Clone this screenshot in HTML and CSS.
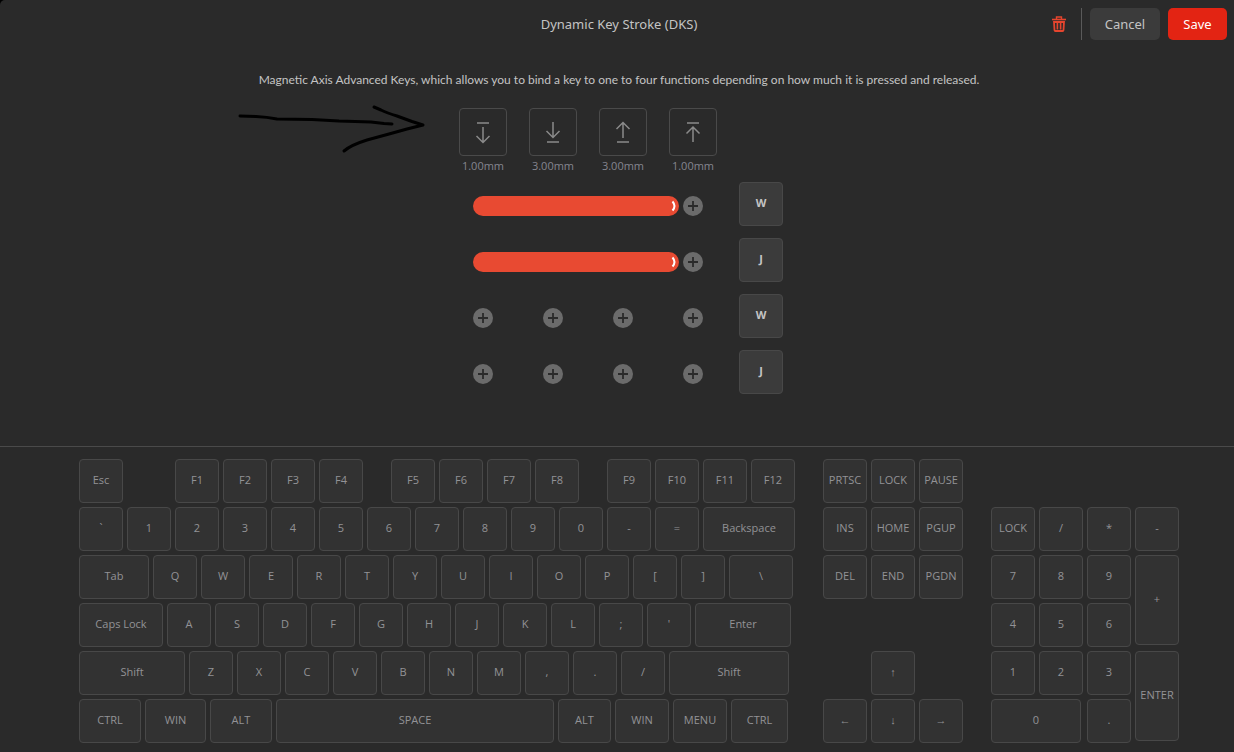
FILE: index.html
```html
<!DOCTYPE html>
<html lang="en">
<head>
  <meta charset="UTF-8">
  <title>Dynamic Key Stroke (DKS)</title>
  <meta name="viewport" content="width=device-width, initial-scale=1">
  <link rel="stylesheet" href="styles.css">
</head>
<body>
  <!-- shared icons -->
  <svg class="sprite" aria-hidden="true">
    <symbol id="plus" viewBox="0 0 20 20">
      <path d="M10 5v10M5 10h10" fill="none" stroke="#2a2a2a" stroke-width="1.8"/>
    </symbol>
    <symbol id="handle" viewBox="0 0 6 12">
      <path d="M1.500 1.500Q5.500 6 1.500 10.500" fill="none" stroke="#fff" stroke-width="2"/>
    </symbol>
  </svg>

  <header class="topbar">
    <h1>Dynamic Key Stroke (DKS)</h1>
    <div class="actions">
      <button class="trash" aria-label="Delete">
        <svg width="14" height="16" viewBox="0 0 14 16" fill="none" stroke="currentColor">
          <path d="M4.500 3V1h5v2" stroke-width="1.400"/>
          <path d="M0 3.500h14" stroke-width="1.600"/>
          <path d="M2 6l.5 8.200q.1.800.8.800h7.400q.7 0 .8-.8L12 6z" stroke-width="1.800"/>
          <path d="M5.400 6v7.500M8.600 6v7.500" stroke-width="1.600"/>
        </svg>
      </button>
      <span class="divider"></span>
      <button class="btn">Cancel</button>
      <button class="btn save">Save</button>
    </div>
  </header>

  <main class="editor">
    <p class="intro">Magnetic Axis Advanced Keys, which allows you to bind a key to one to four functions depending on how much it is pressed and released.</p>

    <div class="dks">
      <svg class="pointer" width="190" height="52" viewBox="0 0 190 52" fill="none" stroke="#000" stroke-width="3" stroke-linecap="round" stroke-linejoin="round">
        <path d="M3 14L19 14.500Q30 15 40 17L75 17.500L102 19L134 20L147 21.500L155 22"/>
        <path d="M137 5L144 8Q150 11 160 14L175 19.500L186 23L170 27L152 32L130 38Q114 43 107 49"/>
      </svg>

      <div class="steps">
        <div class="step">
          <button aria-label="Press start"><svg viewBox="0 0 24 24"><path d="M6 3h12M12 7v15M5.500 16l6.500 6.500L18.500 16"/></svg></button>
          <span>1.00mm</span>
        </div>
        <div class="step">
          <button aria-label="Press bottom"><svg viewBox="0 0 24 24"><path d="M12 2v15M5.500 11l6.500 6.500L18.500 11M6 22h12"/></svg></button>
          <span>3.00mm</span>
        </div>
        <div class="step">
          <button aria-label="Release bottom"><svg viewBox="0 0 24 24"><path d="M12 18V2.500M5.500 9L12 2.500L18.500 9M6 22h12"/></svg></button>
          <span>3.00mm</span>
        </div>
        <div class="step">
          <button aria-label="Release end"><svg viewBox="0 0 24 24"><path d="M6 3h12M12 22V7M5.500 13.500L12 7l6.500 6.500"/></svg></button>
          <span>1.00mm</span>
        </div>
      </div>

      <div class="binding">
        <div class="track bound">
          <button class="bar" aria-label="Range"><svg width="6" height="12"><use href="#handle"/></svg></button>
          <button class="add" aria-label="Add"><svg><use href="#plus"/></svg></button>
        </div>
        <button class="key slot">W</button>
      </div>
      <div class="binding">
        <div class="track bound">
          <button class="bar" aria-label="Range"><svg width="6" height="12"><use href="#handle"/></svg></button>
          <button class="add" aria-label="Add"><svg><use href="#plus"/></svg></button>
        </div>
        <button class="key slot">J</button>
      </div>
      <div class="binding">
        <div class="track">
          <button class="add" aria-label="Add"><svg><use href="#plus"/></svg></button>
          <button class="add" aria-label="Add"><svg><use href="#plus"/></svg></button>
          <button class="add" aria-label="Add"><svg><use href="#plus"/></svg></button>
          <button class="add" aria-label="Add"><svg><use href="#plus"/></svg></button>
        </div>
        <button class="key slot">W</button>
      </div>
      <div class="binding">
        <div class="track">
          <button class="add" aria-label="Add"><svg><use href="#plus"/></svg></button>
          <button class="add" aria-label="Add"><svg><use href="#plus"/></svg></button>
          <button class="add" aria-label="Add"><svg><use href="#plus"/></svg></button>
          <button class="add" aria-label="Add"><svg><use href="#plus"/></svg></button>
        </div>
        <button class="key slot">J</button>
      </div>
    </div>
  </main>

  <section class="keyboard">
    <div class="block">
      <div class="row">
        <button class="key">Esc</button>
        <span class="blank"></span>
        <button class="key">F1</button>
        <button class="key">F2</button>
        <button class="key">F3</button>
        <button class="key">F4</button>
        <span class="blank half"></span>
        <button class="key">F5</button>
        <button class="key">F6</button>
        <button class="key">F7</button>
        <button class="key">F8</button>
        <span class="blank half"></span>
        <button class="key">F9</button>
        <button class="key">F10</button>
        <button class="key">F11</button>
        <button class="key">F12</button>
      </div>
      <div class="row">
        <button class="key">`</button>
        <button class="key">1</button>
        <button class="key">2</button>
        <button class="key">3</button>
        <button class="key">4</button>
        <button class="key">5</button>
        <button class="key">6</button>
        <button class="key">7</button>
        <button class="key">8</button>
        <button class="key">9</button>
        <button class="key">0</button>
        <button class="key">-</button>
        <button class="key">=</button>
        <button class="key backspace">Backspace</button>
      </div>
      <div class="row">
        <button class="key tab">Tab</button>
        <button class="key">Q</button>
        <button class="key">W</button>
        <button class="key">E</button>
        <button class="key">R</button>
        <button class="key">T</button>
        <button class="key">Y</button>
        <button class="key">U</button>
        <button class="key">I</button>
        <button class="key">O</button>
        <button class="key">P</button>
        <button class="key">[</button>
        <button class="key">]</button>
        <button class="key backslash">\</button>
      </div>
      <div class="row">
        <button class="key caps">Caps Lock</button>
        <button class="key">A</button>
        <button class="key">S</button>
        <button class="key">D</button>
        <button class="key">F</button>
        <button class="key">G</button>
        <button class="key">H</button>
        <button class="key">J</button>
        <button class="key">K</button>
        <button class="key">L</button>
        <button class="key">;</button>
        <button class="key">'</button>
        <button class="key enter">Enter</button>
      </div>
      <div class="row">
        <button class="key lshift">Shift</button>
        <button class="key">Z</button>
        <button class="key">X</button>
        <button class="key">C</button>
        <button class="key">V</button>
        <button class="key">B</button>
        <button class="key">N</button>
        <button class="key">M</button>
        <button class="key">,</button>
        <button class="key">.</button>
        <button class="key">/</button>
        <button class="key rshift">Shift</button>
      </div>
      <div class="row">
        <button class="key lmod">CTRL</button>
        <button class="key lwin">WIN</button>
        <button class="key lmod">ALT</button>
        <button class="key space">SPACE</button>
        <button class="key ralt">ALT</button>
        <button class="key rmod">WIN</button>
        <button class="key rmod">MENU</button>
        <button class="key rctrl">CTRL</button>
      </div>
    </div>

    <div class="block nav">
      <button class="key">PRTSC</button>
      <button class="key">LOCK</button>
      <button class="key">PAUSE</button>
      <button class="key">INS</button>
      <button class="key">HOME</button>
      <button class="key">PGUP</button>
      <button class="key">DEL</button>
      <button class="key">END</button>
      <button class="key">PGDN</button>
      <button class="key up">↑</button>
      <button class="key left">←</button>
      <button class="key">↓</button>
      <button class="key">→</button>
    </div>

    <div class="block numpad">
      <button class="key">LOCK</button>
      <button class="key">/</button>
      <button class="key">*</button>
      <button class="key">-</button>
      <button class="key">7</button>
      <button class="key">8</button>
      <button class="key">9</button>
      <button class="key tall">+</button>
      <button class="key">4</button>
      <button class="key">5</button>
      <button class="key">6</button>
      <button class="key">1</button>
      <button class="key">2</button>
      <button class="key">3</button>
      <button class="key tall">ENTER</button>
      <button class="key zero">0</button>
      <button class="key">.</button>
    </div>
  </section>
</body>
</html>
```

FILE: styles.css
```css
* { box-sizing: border-box; }
html { background: #000; }
body {
  margin: 0; min-height: 100vh;
  border-top-left-radius: 5px;
  background: #2a2a2a; color: #c4c4c4;
  font-family: "Open Sans", "Noto Sans", sans-serif;
  font-size: 12px;
}
button {
  margin: 0; padding: 0;
  border: none; background: none;
  font: inherit; color: inherit; cursor: pointer;
}
svg { display: block; }
.sprite { position: absolute; width: 0; height: 0; }

/* Top bar */
.topbar {
  display: grid; grid-template-columns: 1fr auto 1fr;
  align-items: center;
  height: 48px; padding: 0 7px 0 11px;
  font-family: "Noto Sans", sans-serif; font-size: 13px;
}
.topbar h1 {
  grid-column: 2; margin: 0;
  font-size: 13px; font-weight: 400;
}
.actions { display: flex; justify-content: flex-end; align-items: center; gap: 8px; }
.trash { color: #e5452e; padding: 0 7px; }
.divider { width: 1px; height: 32px; background: #5a5a5a; }
.btn {
  min-width: 70px; height: 32px;
  border-radius: 5px;
  background: #3b3b3b;
}
.save { min-width: 59px; background: #e32413; color: #fff; }

/* Stroke editor */
.editor {
  display: flex; flex-direction: column; align-items: center;
  height: 399px; padding: 22px 0 0 4px;
  border-bottom: 1px solid #4a4a4a;
}
.intro {
  margin: 0 0 18px;
  font-family: Lato, "Open Sans", sans-serif; line-height: 20px;
}
.dks { position: relative; width: 342px; }
.pointer { position: absolute; left: -211px; top: -6px; }
.steps { display: flex; gap: 22px; padding-left: 11px; margin-bottom: 6px; }
.step { width: 48px; text-align: center; color: #85858f; line-height: 20px; white-space: nowrap; }
.step span { display: block; height: 20px; font-size: 11px; }
.step button {
  display: flex; align-items: center; justify-content: center;
  width: 48px; height: 48px;
  border: 1px solid #4a4a4a; border-radius: 4px;
}
.step svg { width: 24px; height: 24px; fill: none; stroke: #8a8a8a; stroke-width: 1.5; }
.binding { display: flex; margin-bottom: 12px; }
.track {
  display: flex; align-items: center; gap: 50px;
  width: 291px; padding: 4px 0 0 25px;
}
.bound { gap: 4px; }
.bar {
  display: flex; align-items: center; justify-content: flex-end;
  width: 206px; height: 20px; padding-right: 2px;
  border-radius: 10px; background: #e84a32;
}
.add { width: 20px; height: 20px; border-radius: 50%; background: #6b6b6b; }
.add svg { width: 20px; height: 20px; }

/* Keyboard */
.keyboard {
  display: flex; justify-content: center; gap: 28px;
  padding: 12px 0 8px 24px;
}
.block { display: flex; flex-direction: column; gap: 4px; }
.row { display: flex; gap: 4px; }
.key {
  flex: none;
  width: 44px; height: 44px; padding-bottom: 3px;
  border: 1px solid #484848; border-radius: 4px;
  background: #323232; color: #929296;
  font-size: 11px;
}
.key:hover { background: #3b3b3b; }
.slot { background: #3b3b3b; color: #c4c4c4; font-weight: 700; }
.blank { width: 44px; }
.half { width: 20px; }
.backspace { width: 92px; }
.tab { width: 70px; }
.backslash { width: 64px; }
.caps { width: 84px; }
.enter { width: 96px; }
.lshift { width: 106px; }
.rshift { width: 120px; }
.lmod { width: 62px; }
.lwin { width: 61px; }
.space { width: 278px; }
.ralt { width: 53px; }
.rmod { width: 54px; }
.rctrl { width: 57px; }

.nav, .numpad {
  display: grid; align-content: start;
  grid-template-columns: repeat(3, 44px); grid-auto-rows: 44px;
}
.nav { grid-template-rows: repeat(6, 44px); }
.nav .up { grid-area: 5 / 2; }
.nav .left { grid-area: 6 / 1; }
.nav .left ~ .key { grid-row: 6; }
.numpad { grid-template-columns: repeat(4, 44px); margin-top: 48px; }
.numpad .tall { grid-row: span 2; height: 90px; }
.numpad .zero { grid-column: span 2; width: 90px; }
```
